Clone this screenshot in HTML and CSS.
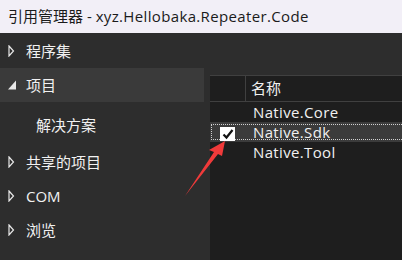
FILE: index.html
```html
<!DOCTYPE html>
<html lang="zh-CN">
<head>
    <meta charset="UTF-8">
    <title>引用管理器</title>
    <link rel="stylesheet" href="styles.css">
</head>
<body>
    <div class="titlebar">引用管理器 - <span class="latin">xyz.Hellobaka.Repeater.Code</span></div>

    <div class="main">
        <ul class="tree">
            <li class="node">
                <svg class="twisty" width="18" height="12" viewBox="0 0 18 12"><polygon points="1,1 5.5,6 1,11" fill="none" stroke="#e8e8e8" stroke-width="1.2"/></svg>
                程序集
            </li>
            <li class="node selected">
                <svg class="twisty" width="18" height="12" viewBox="0 0 18 12"><polygon points="8,1.5 8,10.5 0,10.5" fill="#e8e8e8"/></svg>
                项目
            </li>
            <li class="node child">解决方案</li>
            <li class="node">
                <svg class="twisty" width="18" height="12" viewBox="0 0 18 12"><polygon points="1,1 5.5,6 1,11" fill="none" stroke="#e8e8e8" stroke-width="1.2"/></svg>
                共享的项目
            </li>
            <li class="node">
                <svg class="twisty" width="18" height="12" viewBox="0 0 18 12"><polygon points="1,1 5.5,6 1,11" fill="none" stroke="#e8e8e8" stroke-width="1.2"/></svg>
                COM
            </li>
            <li class="node">
                <svg class="twisty" width="18" height="12" viewBox="0 0 18 12"><polygon points="1,1 5.5,6 1,11" fill="none" stroke="#e8e8e8" stroke-width="1.2"/></svg>
                浏览
            </li>
        </ul>

        <div class="list">
            <div class="list-header">
                <div class="col-check"></div>
                <div class="col-name">名称</div>
            </div>
            <div class="row">
                <div class="col-check"></div>
                <div class="col-name latin">Native.Core</div>
            </div>
            <div class="row current">
                <div class="focus">
                    <span class="checkbox">
                        <svg width="14" height="14" viewBox="0 0 14 14"><path d="M2.5 7.5 L5.5 10.5 L11.5 3" fill="none" stroke="#111" stroke-width="2.2"/></svg>
                    </span>
                    <span class="col-name latin">Native.Sdk</span>
                </div>
            </div>
            <div class="row">
                <div class="col-check"></div>
                <div class="col-name latin">Native.Tool</div>
            </div>
        </div>
    </div>

    <!-- red pointer drawn over the screenshot -->
    <svg class="pointer" width="402" height="260" viewBox="0 0 402 260">
        <polygon points="225,141 209,150 214,152 185,196 218,154 222,156" fill="#f03a3a"/>
    </svg>
</body>
</html>
```

FILE: styles.css
```css
body {
    margin: 0;
    width: 402px;
    height: 260px;
    overflow: hidden;
    background-color: #2d2d2d;
    color: #f1f1f1;
    font-family: "Open Sans", "Noto Sans CJK SC", sans-serif;
    font-size: 15px;
    position: relative;
}
.latin { letter-spacing: 0.35px; }
.titlebar {
    height: 33px;
    line-height: 33px;
    padding-left: 8px;
    background-color: #f2eff7;
    color: #1b1b1b;
    white-space: nowrap;
}
.main {
    display: flex;
    height: 227px;
}
.tree {
    list-style: none;
    margin: 0;
    padding: 1px 0 0 0;
    width: 204px;
    flex-shrink: 0;
}
.node {
    height: 34px;
    line-height: 34px;
    padding-left: 8px;
    display: flex;
    align-items: center;
    white-space: nowrap;
}
.node.selected { background-color: #3a3a3a; }
.node.child {
    padding-left: 36px;
    margin-top: 6px;
    margin-bottom: 3px;
}
.twisty { flex-shrink: 0; }

.list {
    flex: 1;
    margin-left: 6px;
    margin-top: 42px;
    background-color: #1e1e1e;
    border-top: 1px solid #404040;
}
.list-header {
    display: flex;
    height: 25px;
    line-height: 25px;
    border-bottom: 1px solid #404040;
}
.list-header .col-check {
    width: 35px;
    border-right: 1px solid #404040;
}
.list-header .col-name { padding-left: 5px; }
.row {
    display: flex;
    height: 20px;
    line-height: 20px;
}
.row .col-check { width: 43px; }
.row.current {
    background-color: #3b3b3b;
    align-items: center;
}
.focus {
    flex: 1;
    display: flex;
    align-items: center;
    height: 14px;
    margin-left: 1px;
    border: 1px dotted #d0d0d0;
    border-right: none;
}
.checkbox {
    width: 15px;
    height: 14px;
    margin-left: 8px;
    margin-right: 18px;
    margin-top: 4px;
    background-color: #fff;
    display: flex;
    align-items: center;
    justify-content: center;
}
.pointer {
    position: absolute;
    left: 0;
    top: 0;
    pointer-events: none;
}
```
